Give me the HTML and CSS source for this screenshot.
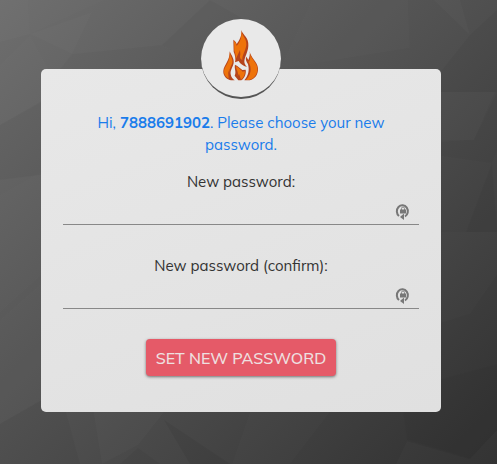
FILE: index.html
```html
<!DOCTYPE html>
<html lang="en">
<head>
<meta charset="utf-8">
<meta name="viewport" content="width=device-width, initial-scale=1">
<title>Set new password</title>
<link rel="stylesheet" href="styles.css">
</head>
<body>
<svg class="backdrop" viewBox="0 0 497 464" preserveAspectRatio="none" aria-hidden="true">
  <g fill="#fff">
    <path opacity=".02" d="M0 0H28L30 34 0 42Z"/>
    <path opacity=".012" d="M28 0H104L30 34Z"/>
    <path opacity=".015" d="M92 12L72 54 30 34Z"/>
    <path opacity=".01" d="M0 65L30 36 60 90 0 125Z"/>
    <path opacity=".01" d="M0 195L80 150V240L0 312Z"/>
    <path opacity=".01" d="M0 320L80 250V378L0 424Z"/>
    <path opacity=".02" d="M434 0H460L470 35Z"/>
    <path opacity=".01" d="M280 69L410 48 408 0H312Z"/>
    <path opacity=".01" d="M400 92H495L474 140 400 145Z"/>
    <path opacity=".01" d="M497 232V275L470 314 400 336V232Z"/>
    <path opacity=".02" d="M90 390L164 412 138 445 102 464Z"/>
    <path opacity=".012" d="M250 412L232 464H290L330 412Z"/>
    <path opacity=".015" d="M407 441L470 459 497 430V464H396Z"/>
  </g>
  <g fill="#000">
    <path opacity=".03" d="M210 0L162 45 205 69 245 20Z"/>
    <path opacity=".025" d="M72 54L162 45 205 69H60Z"/>
    <path opacity=".03" d="M0 125L80 80V170L0 180Z"/>
    <path opacity=".03" d="M497 10L470 35 430 85 400 92H497Z"/>
    <path opacity=".02" d="M400 140L474 140 497 92V150L492 163 400 150Z"/>
    <path opacity=".03" d="M492 163L466 232H497Z"/>
    <path opacity=".03" d="M0 424L60 390 80 464H0Z"/>
    <path opacity=".05" d="M164 420L230 464H190Z"/>
    <path opacity=".04" d="M138 448L160 464H120Z"/>
    <path opacity=".02" d="M400 390L497 364V430L470 458 407 440Z"/>
  </g>
</svg>
<main class="page">
  <section class="card">
    <div class="logo">
      <svg class="flame" viewBox="98 56 108 156" role="img" aria-label="Flame">
        <g fill="#b5441c">
          <path d="M153 59C158 75 176 82 174 106C173 126 163 138 162 153C162 160 165 165 170 170C158 167 149 160 145 152L134 156C137 147 134 133 130 124L129 88C134 92 138 96 139 101C148 90 155 74 153 59Z"/>
          <path d="M118 123C123 135 132 145 130 158C127 172 119 180 121 192C122 201 128 206 133 210H122L118 209C105 204 98 193 99 181C101 164 119 151 118 123Z"/>
          <path d="M178 122C180 142 202 154 203 174C204 192 194 207 178 210H162C174 197 178 180 173 162C169 153 164 148 168 139L174 149C177 141 180 133 178 122Z"/>
          <path d="M134 163C144 168 150 174 156 179L166 178C168 190 163 203 153 210H144L133 196C139 184 131 175 134 163Z"/>
        </g>
        <g fill="#ee730b">
          <path d="M153 63C157 79 169 85 168 104C166 121 155 134 156 149C150 148 147 142 150 132L149 119 136 147C138 135 134 128 132 121L131 92C136 96 138 101 139 107C150 96 155 78 153 63Z"/>
          <path d="M118 128C123 141 128 148 126 157C122 169 115 178 117 190L113 180 115 205C105 198 100 190 101 181C104 166 120 154 118 128Z"/>
          <path d="M179 129C183 148 200 157 201 174C202 191 192 206 176 209H167C177 198 181 187 181 177C181 164 175 157 171 147L176 155C180 147 181 139 179 129Z"/>
          <path d="M137 168C146 173 152 179 157 184L163 182C165 191 160 202 152 208L146 190 142 198C146 187 137 178 137 168Z"/>
        </g>
      </svg>
    </div>
    <form class="form">
      <p class="intro">Hi, <strong>7888691902</strong>. Please choose your new password.</p>
      <div class="field">
        <label for="new-password">New password:</label>
        <div class="control">
          <input id="new-password" type="password" autocomplete="new-password">
          <svg class="key" viewBox="0 0 16 18" aria-hidden="true">
            <path d="M4 14A5.500 6 0 1 1 10 14.500" fill="none" stroke="#777" stroke-width="2"/>
            <path d="M9 11.500V18L5 15Z" fill="#777"/>
            <path d="M6.500 8V6.500a1.500 1.500 0 0 1 3 0V8" fill="none" stroke="#888"/>
            <rect x="5" y="7.500" width="6" height="4" fill="#777"/>
          </svg>
        </div>
      </div>
      <div class="field">
        <label for="confirm-password">New password (confirm):</label>
        <div class="control">
          <input id="confirm-password" type="password" autocomplete="new-password">
          <svg class="key" viewBox="0 0 16 18" aria-hidden="true">
            <path d="M4 14A5.500 6 0 1 1 10 14.500" fill="none" stroke="#777" stroke-width="2"/>
            <path d="M9 11.500V18L5 15Z" fill="#777"/>
            <path d="M6.500 8V6.500a1.500 1.500 0 0 1 3 0V8" fill="none" stroke="#888"/>
            <rect x="5" y="7.500" width="6" height="4" fill="#777"/>
          </svg>
        </div>
      </div>
      <button class="submit" type="submit">SET NEW PASSWORD</button>
    </form>
  </section>
</main>
</body>
</html>
```
FILE: styles.css
```css
* {
  box-sizing: border-box;
}

body {
  margin: 0;
  min-height: 100vh;
  background: #4a4a4a;
  color: #333;
  font-family: Muli, Mulish, Lato, "Open Sans", sans-serif;
  font-size: 15px;
  line-height: 22px;
}

.backdrop {
  position: fixed;
  inset: 0;
  z-index: -1;
  width: 100%;
  height: 100%;
  background: linear-gradient(135deg, #6e6e6e, #505050 50%, #303030);
}

.page {
  display: flex;
  justify-content: center;
  padding: 69px 15px 52px 0;
}

.card {
  display: flex;
  flex-direction: column;
  align-items: center;
  width: 100%;
  max-width: 400px;
  padding: 0 22px 36px;
  border-radius: 5px;
  background: linear-gradient(160deg, #e8e8e8, #e0e0e0);
}

.logo {
  display: flex;
  justify-content: center;
  width: 80px;
  height: 80px;
  margin-top: -50px;
  padding-top: 10px;
  border-bottom: 2px solid #555;
  border-radius: 50%;
  background: #e9e9e9;
}

.flame {
  width: 36px;
  height: 52px;
}

.form {
  display: flex;
  flex-direction: column;
  align-items: center;
  width: 100%;
  padding-top: 13px;
}

.intro {
  max-width: 300px;
  margin: 0 0 15px;
  color: #1a7ceb;
  text-align: center;
}

.field {
  width: 100%;
  margin-bottom: 30px;
  text-align: center;
}

.field label {
  display: block;
}

.control {
  position: relative;
}

.control input {
  display: block;
  width: 100%;
  height: 32px;
  padding: 0 32px 0 0;
  border: 0;
  border-bottom: 1px solid #888;
  border-radius: 0;
  outline: 0;
  background: transparent;
  color: inherit;
  font: inherit;
}

.key {
  position: absolute;
  top: 9px;
  right: 8px;
  width: 16px;
  height: 18px;
}

.submit {
  height: 37px;
  padding: 0 10px;
  border: 0;
  border-radius: 4px;
  background: #e55a68;
  box-shadow: 0 1px 3px rgba(0, 0, 0, 0.5);
  color: #eee0e0;
  font: inherit;
  font-size: 16px;
  font-weight: 500;
}
```
